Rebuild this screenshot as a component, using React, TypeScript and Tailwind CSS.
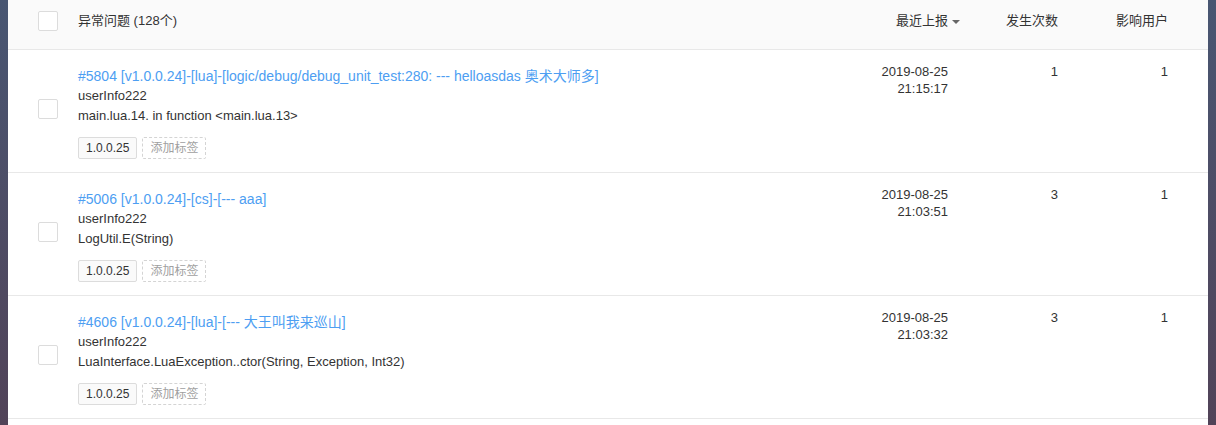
const issues = [
  {
    id: 5804,
    title: '#5804 [v1.0.0.24]-[lua]-[logic/debug/debug_unit_test:280: --- helloasdas 奥术大师多]',
    user: 'userInfo222',
    stack: 'main.lua.14. in function <main.lua.13>',
    date: '2019-08-25',
    time: '21:15:17',
    count: 1,
    users: 1,
  },
  {
    id: 5006,
    title: '#5006 [v1.0.0.24]-[cs]-[--- aaa]',
    user: 'userInfo222',
    stack: 'LogUtil.E(String)',
    date: '2019-08-25',
    time: '21:03:51',
    count: 3,
    users: 1,
  },
  {
    id: 4606,
    title: '#4606 [v1.0.0.24]-[lua]-[--- 大王叫我来巡山]',
    user: 'userInfo222',
    stack: 'LuaInterface.LuaException..ctor(String, Exception, Int32)',
    date: '2019-08-25',
    time: '21:03:32',
    count: 3,
    users: 1,
  },
];

function Checkbox() {
  return <span className="block h-5 w-5 rounded-[2px] border border-[#dcdcdc] bg-white" />;
}

function IssueRow({ issue }: { issue: (typeof issues)[number] }) {
  return (
    <div className="grid grid-cols-[30px_20px_20px_760px_110px_110px_110px] border-b border-[#e8e8e8] h-[123px]">
      <div />
      <div className="flex items-center pb-[5px]">
        <Checkbox />
      </div>
      <div />
      <div className="pt-4 leading-5">
        <div className="text-[14px] text-[#4d9ef2] whitespace-nowrap">{issue.title}</div>
        <div>{issue.user}</div>
        <div>{issue.stack}</div>
        <div className="mt-[11px] flex gap-[5px] text-[12px]">
          <span className="flex h-[22px] items-center rounded-[2px] border border-[#dcdcdc] bg-[#fafafa] px-[7px] leading-none">
            1.0.0.25
          </span>
          <span className="flex h-[22px] items-center rounded-[2px] border border-dashed border-[#d4d4d4] px-[7px] leading-none text-[#a0a0a0]">
            添加标签
          </span>
        </div>
      </div>
      <div className="pt-[13px] text-right leading-[17px]">
        <div>{issue.date}</div>
        <div>{issue.time}</div>
      </div>
      <div className="pt-[13px] text-right leading-[17px]">{issue.count}</div>
      <div className="pt-[13px] text-right leading-[17px]">{issue.users}</div>
    </div>
  );
}

export default function App() {
  return (
    <div className="h-[425px] overflow-hidden bg-gradient-to-b from-[#485672] to-[#514358] px-2 font-['Liberation_Sans','Noto_Sans_CJK_SC',sans-serif] text-[13px] text-[#333]">
      <div className="h-full bg-white">
        <div className="grid h-[50px] grid-cols-[30px_20px_20px_784px_98px_98px_110px] items-start border-b border-[#e8e8e8] bg-[#fafafa] pt-[11px]">
          <div />
          <Checkbox />
          <div />
          <div className="leading-5">异常问题 (128个)</div>
          <div className="flex h-5 items-center justify-end leading-5">
            最近上报
            <span className="ml-[4px] mt-[1px] h-0 w-0 border-x-[4px] border-t-[4px] border-x-transparent border-t-[#666]" />
          </div>
          <div className="text-right leading-5">发生次数</div>
          <div className="text-right leading-5">影响用户</div>
        </div>
        {issues.map((issue) => (
          <IssueRow key={issue.id} issue={issue} />
        ))}
      </div>
    </div>
  );
}
